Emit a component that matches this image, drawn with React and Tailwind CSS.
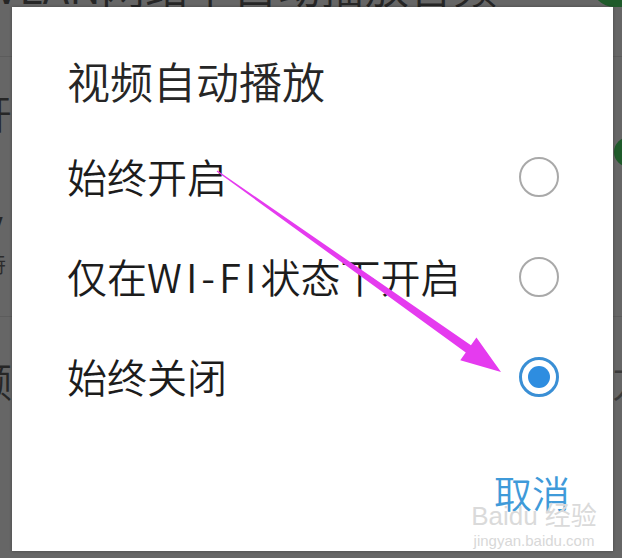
import React from "react";

const options = [
  { label: ["始终开启"], checked: false },
  { label: ["仅在", "WI-FI", "状态下开启"], checked: false },
  { label: ["始终关闭"], checked: true },
];

const Radio = ({ checked }) =>
  checked ? (
    <span className="flex h-[40px] w-[40px] items-center justify-center rounded-full border-[3px] border-[#3a8fd5]">
      <span className="h-[22px] w-[22px] rounded-full bg-[#2e8de0]" />
    </span>
  ) : (
    <span className="h-[40px] w-[40px] rounded-full border-[2.5px] border-[#a9a9a9]" />
  );

const Arrow = () => {
  // tapered magenta arrow pointing at the selected option
  const sx = 217, sy = 171, tx = 501, ty = 372;
  const len = Math.hypot(tx - sx, ty - sy);
  const dx = (tx - sx) / len, dy = (ty - sy) / len;
  const px = -dy, py = dx;
  const bx = tx - dx * 40, by = ty - dy * 40;
  const pts = [
    [sx + px * 0.6, sy + py * 0.6],
    [bx + px * 4.5, by + py * 4.5],
    [bx + px * 14, by + py * 14],
    [tx, ty],
    [bx - px * 14, by - py * 14],
    [bx - px * 4.5, by - py * 4.5],
    [sx - px * 0.6, sy - py * 0.6],
  ]
    .map((p) => p.join(","))
    .join(" ");
  return (
    <svg className="pointer-events-none absolute left-0 top-0" width="622" height="558">
      <polygon points={pts} fill="#e53bef" />
    </svg>
  );
};

export default function App() {
  return (
    <div
      className="relative h-[558px] w-[622px] overflow-hidden bg-[#666666] text-[#262626]"
      style={{ fontFamily: '"Noto Sans CJK SC", "Noto Sans", sans-serif' }}
    >
      {/* dimmed settings page behind the dialog */}
      <div className="flex flex-col font-[350]">
        <div className="-mt-[37px] -ml-[6px] flex h-[94px] items-start justify-between border-b border-[#5c5c5c]">
          <span className="whitespace-nowrap text-[44px] leading-[44px] text-[#262626]">VLAN网络下自动播放音频</span>
          <span className="mr-[-20px] h-[44px] w-[50px] rounded-full bg-[#1f5a2a]" />
        </div>
        <div className="flex h-[110px] items-center justify-between">
          <span className="-ml-[28px] text-[40px] text-[#262626]">开</span>
          <span className="mr-[-22px] mt-[80px] h-[30px] w-[30px] rounded-full bg-[#1f5a2a]" />
        </div>
        <div className="flex h-[150px] flex-col justify-center border-b border-[#5c5c5c]">
          <span className="-ml-[20px] text-[40px] leading-[40px] text-[#262626]">V</span>
          <span className="-ml-[16px] text-[22px] leading-[26px] text-[#2c2c2c]">特</span>
        </div>
        <div className="flex h-[126px] items-center justify-between">
          <span className="-ml-[28px] text-[40px] text-[#262626]">频</span>
          <span className="mr-[-30px] text-[40px] text-[#3a3a3a]">方</span>
        </div>
      </div>

      {/* dialog */}
      <div className="absolute left-[12px] top-[7px] flex h-[544px] w-[601px] flex-col bg-white font-[350] shadow-[0_0_3px_rgba(0,0,0,0.3)]">
        <div className="pl-[55px] pt-[53px] text-[43px] leading-[40px] text-[#262626]">视频自动播放</div>
        <div className="mt-[27px] flex flex-col">
          {options.map((o) => (
            <div key={o.label.join("")} className="flex h-[100px] items-center justify-between pl-[55px] pr-[54px]">
              <span className="-mt-[3px] whitespace-nowrap text-[40px] leading-[40px] text-[#1c1c1c]">
                {o.label.map((part) =>
                  part === "WI-FI" ? (
                    <span key={part} className="tracking-[4px]">{part}</span>
                  ) : (
                    <span key={part}>{part}</span>
                  )
                )}
              </span>
              <Radio checked={o.checked} />
            </div>
          ))}
        </div>
        <div className="mt-[47px] flex justify-end pr-[43px]">
          <span className="text-[38px] leading-[36px] text-[#3f9ad9]">取消</span>
        </div>
      </div>

      {/* watermark */}
      <div className="pointer-events-none absolute left-[474px] top-[502px] flex w-[120px] flex-col items-center">
        <span className="whitespace-nowrap text-[26px] leading-[28px] text-[#dadada]" style={{ fontFamily: '"Liberation Sans", "Noto Sans CJK SC", sans-serif' }}>
          Baidu 经验
        </span>
        <span className="whitespace-nowrap text-[15px] leading-[22px] text-[#d8d8d8]" style={{ fontFamily: '"Liberation Sans", sans-serif' }}>
          jingyan.baidu.com
        </span>
      </div>

      <Arrow />
    </div>
  );
}
